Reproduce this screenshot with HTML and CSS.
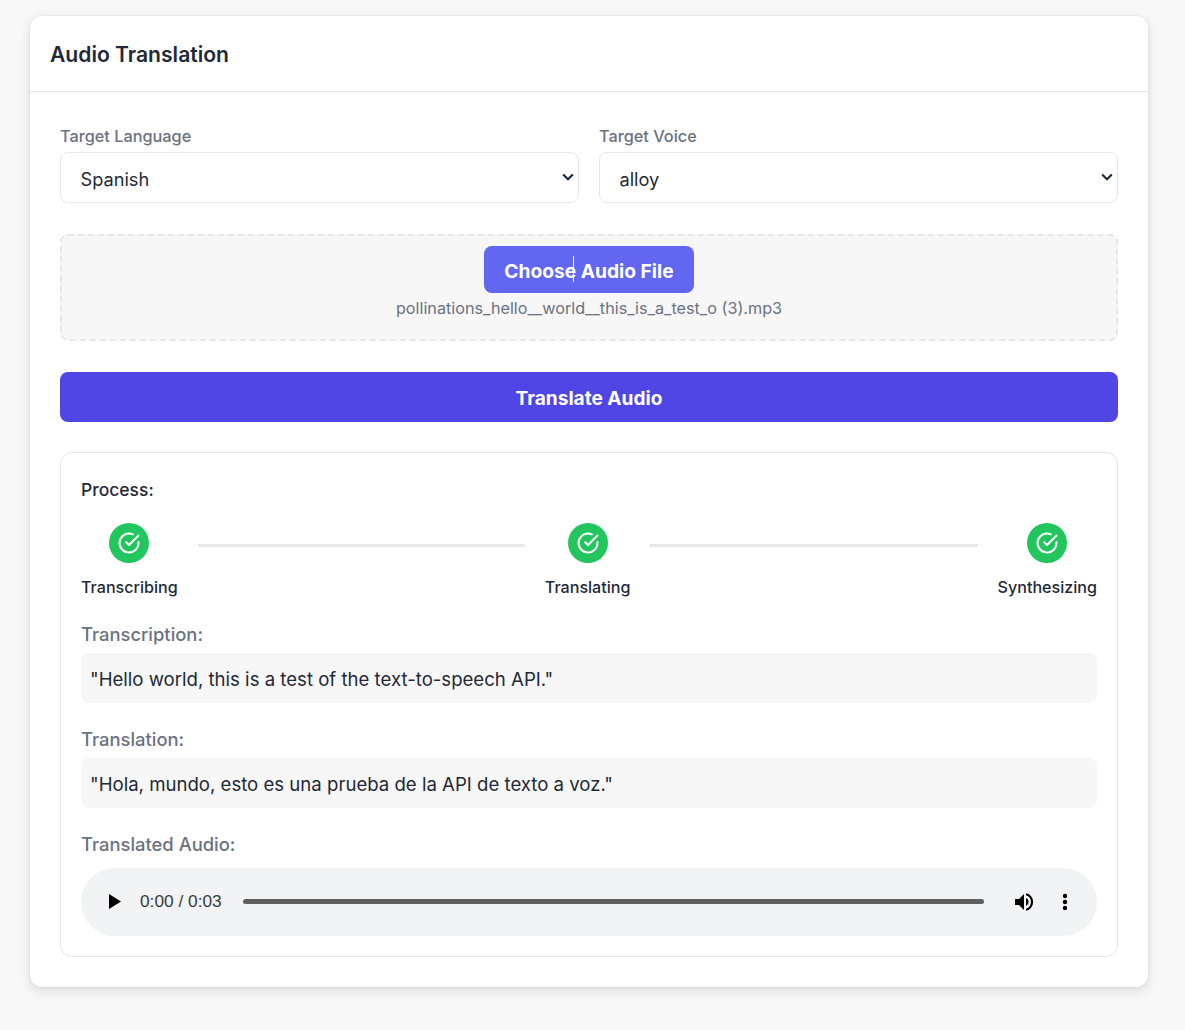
FILE: index.html
```html
<!DOCTYPE html>
<html lang="en">
<head>
    <meta charset="UTF-8">
    <title>Audio Translation</title>
    <link rel="stylesheet" href="styles.css">
</head>
<body>
    <div class="card">
        <div class="card-header">
            <h2>Audio Translation</h2>
        </div>
        <div class="card-body">
            <!-- language and voice -->
            <div class="form-row">
                <div class="form-group">
                    <label for="language">Target Language</label>
                    <div class="select-wrap">
                        <select id="language">
                            <option>Spanish</option>
                        </select>
                        <svg class="chevron" viewBox="0 0 12 8" width="12" height="8"><path d="M1.2 1.5 6 6.2l4.8-4.7"/></svg>
                    </div>
                </div>
                <div class="form-group">
                    <label for="voice">Target Voice</label>
                    <div class="select-wrap">
                        <select id="voice">
                            <option>alloy</option>
                        </select>
                        <svg class="chevron" viewBox="0 0 12 8" width="12" height="8"><path d="M1.2 1.5 6 6.2l4.8-4.7"/></svg>
                    </div>
                </div>
            </div>

            <!-- file upload -->
            <div class="upload">
                <button class="btn-choose">Choose Audio File<span class="text-cursor"></span></button>
                <div class="file-name">pollinations_hello__world__this_is_a_test_o (3).mp3</div>
            </div>

            <button class="btn-translate">Translate Audio</button>

            <!-- process -->
            <div class="process">
                <div class="process-title">Process:</div>
                <div class="steps">
                    <div class="step">
                        <div class="step-icon">
                            <svg viewBox="0 0 24 24" width="24" height="24"><path d="M21.5 11.1V12a9.5 9.5 0 1 1-5.6-8.7"/><path d="M21.5 4.5 12 14l-2.8-2.8"/></svg>
                        </div>
                        <div class="step-label">Transcribing</div>
                    </div>
                    <div class="connector"></div>
                    <div class="step">
                        <div class="step-icon">
                            <svg viewBox="0 0 24 24" width="24" height="24"><path d="M21.5 11.1V12a9.5 9.5 0 1 1-5.6-8.7"/><path d="M21.5 4.5 12 14l-2.8-2.8"/></svg>
                        </div>
                        <div class="step-label">Translating</div>
                    </div>
                    <div class="connector"></div>
                    <div class="step">
                        <div class="step-icon">
                            <svg viewBox="0 0 24 24" width="24" height="24"><path d="M21.5 11.1V12a9.5 9.5 0 1 1-5.6-8.7"/><path d="M21.5 4.5 12 14l-2.8-2.8"/></svg>
                        </div>
                        <div class="step-label">Synthesizing</div>
                    </div>
                </div>

                <div class="result">
                    <div class="result-title">Transcription:</div>
                    <div class="result-text">"Hello world, this is a test of the text-to-speech API."</div>
                </div>
                <div class="result">
                    <div class="result-title">Translation:</div>
                    <div class="result-text">"Hola, mundo, esto es una prueba de la API de texto a voz."</div>
                </div>
                <div class="result">
                    <div class="result-title">Translated Audio:</div>
                    <div class="player">
                        <svg class="play" viewBox="0 0 12 15" width="12" height="15"><path d="M0 0v15l12-7.5z"/></svg>
                        <span class="time">0:00 / 0:03</span>
                        <div class="track"></div>
                        <svg class="volume" viewBox="0 0 24 24" width="24" height="24"><path d="M3 9v6h4l5 5V4L7 9z"/><path d="M14 3.2v2.1a7 7 0 0 1 0 13.4v2.1a9 9 0 0 0 0-17.6z"/><path d="M14 7.9v8.2a4.5 4.5 0 0 0 0-8.2z"/></svg>
                        <svg class="more" viewBox="0 0 6 18" width="6" height="18"><circle cx="3" cy="3" r="2.2"/><circle cx="3" cy="9" r="2.2"/><circle cx="3" cy="15" r="2.2"/></svg>
                    </div>
                </div>
            </div>
        </div>
    </div>
</body>
</html>
```

FILE: styles.css
```css
body {
    font-family: Inter, "Liberation Sans", sans-serif;
    margin: 0;
    padding: 16px 37px 43px 30px;
    background-color: #f8f8f8;
    color: #1f2937;
}

.card {
    background-color: #fff;
    border-radius: 12px;
    box-shadow: 0 0 2px rgba(0, 0, 0, 0.12), 0 4px 12px rgba(0, 0, 0, 0.12);
}

.card-header {
    height: 75px;
    padding: 0 20px;
    display: flex;
    align-items: center;
    border-bottom: 1px solid #e5e7eb;
}

.card-header h2 {
    margin: 2px 0 0;
    font-size: 21.1px;
    font-weight: 600;
    line-height: 1.2;
}

.card-body {
    padding: 35px 30px 30px;
}

.form-row {
    display: flex;
    gap: 20px;
    margin-bottom: 31px;
}

.form-group {
    flex: 1;
}

.form-group label {
    display: block;
    margin-bottom: 6px;
    font-size: 16.3px;
    line-height: 19px;
    font-weight: 500;
    color: #6b7280;
}

.select-wrap {
    position: relative;
}

select {
    display: block;
    width: 100%;
    height: 51px;
    padding: 2px 19.5px 0;
    font-family: inherit;
    font-size: 18.2px;
    color: #1f2937;
    background-color: #fff;
    border: 1px solid #e5e7eb;
    border-radius: 8px;
    appearance: none;
}

.chevron {
    position: absolute;
    right: 5px;
    top: 21px;
    pointer-events: none;
    fill: none;
    stroke: #1f2937;
    stroke-width: 2.2;
}

.upload {
    height: 107px;
    box-sizing: border-box;
    padding-top: 10px;
    margin-bottom: 31px;
    text-align: center;
    background-color: #f7f7f7;
    border: 2px dashed #e5e7eb;
    border-radius: 8px;
}

.btn-choose {
    position: relative;
    display: inline-block;
    height: 47px;
    padding: 2px 20px 0;
    font-family: inherit;
    font-size: 19.2px;
    font-weight: 700;
    color: #fff;
    background-color: #6366f1;
    border: none;
    border-radius: 8px;
    vertical-align: top;
}

/* mouse cursor caught in the screenshot */
.text-cursor {
    position: absolute;
    left: 89px;
    top: 10px;
    width: 1px;
    height: 26px;
    background-color: #fff;
}

.file-name {
    margin-top: 4px;
    font-size: 16.2px;
    line-height: 22px;
    color: #6b7280;
}

.btn-translate {
    display: block;
    width: 100%;
    height: 50px;
    padding-top: 2px;
    margin-bottom: 30px;
    font-family: inherit;
    font-size: 19.1px;
    font-weight: 700;
    color: #fff;
    background-color: #4f46e5;
    border: none;
    border-radius: 8px;
}

.process {
    padding: 20px;
    border: 1px solid #e5e7eb;
    border-radius: 12px;
}

.process-title {
    font-size: 17.5px;
    font-weight: 500;
    line-height: 32px;
    margin-top: 1px;
    margin-bottom: 17px;
}

.steps {
    display: flex;
    align-items: flex-start;
    margin-bottom: 9px;
}

.step {
    display: flex;
    flex-direction: column;
    align-items: center;
}

.step-icon {
    width: 40px;
    height: 40px;
    display: flex;
    align-items: center;
    justify-content: center;
    border-radius: 50%;
    background-color: #22c55e;
}

.step-icon svg {
    fill: none;
    stroke: #fff;
    stroke-width: 2;
    stroke-linecap: round;
    stroke-linejoin: round;
}

.step-label {
    margin-top: 13px;
    font-size: 16.1px;
    font-weight: 500;
    line-height: 22px;
}

.connector {
    flex: 1;
    height: 3px;
    margin: 21px 20px 0;
    background-color: #e5e7eb;
}

.result {
    margin-top: 24px;
}

.result-title {
    font-size: 18.4px;
    font-weight: 500;
    line-height: 24px;
    margin-bottom: 7px;
    color: #6b7280;
}

.result-text {
    height: 50px;
    box-sizing: border-box;
    padding: 2px 9px 0;
    display: flex;
    align-items: center;
    font-size: 18.6px;
    background-color: #f7f7f7;
    border-radius: 8px;
}

.player {
    height: 67px;
    margin-top: 12px;
    padding: 0 26px 1px 28px;
    display: flex;
    align-items: center;
    border-radius: 34px;
    background-color: #f1f3f4;
}

.play {
    margin-right: 19px;
    fill: #000;
}

.time {
    font-family: "Liberation Sans", Arial, sans-serif;
    font-size: 17.3px;
    color: #3b3b3b;
}

.track {
    flex: 1;
    height: 5px;
    margin: 0 28px 0 21px;
    border-radius: 3px;
    background-color: #5f5f5f;
}

.volume {
    fill: #000;
    margin-right: 26px;
}

.more {
    fill: #000;
    margin-right: 3px;
}
```
